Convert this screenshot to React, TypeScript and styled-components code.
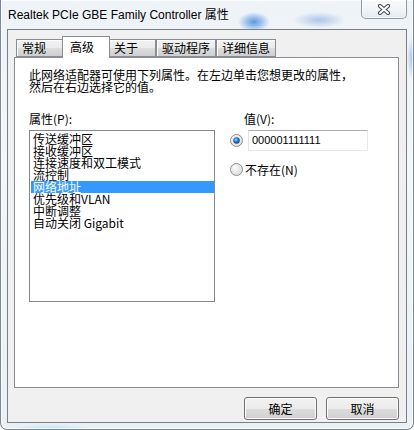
import styled, { createGlobalStyle } from "styled-components";

const GlobalStyle = createGlobalStyle`
    html, body {
        margin: 0;
        padding: 0;
        background: #ffffff;
    }
    body {
        font-family: "Noto Sans CJK SC", "Liberation Sans", sans-serif;
        font-size: 12px;
        color: #000;
    }
`;

const Window = styled.div`
    box-sizing: border-box;
    width: 414px;
    height: 430px;
    display: flex;
    flex-direction: column;
    padding: 0 6px 6px;
    border: 1px solid #7d8794;
    border-top: none;
    border-radius: 0 0 7px 7px;
    box-shadow: inset 0 0 0 1px rgba(255, 255, 255, 0.75);
    background:
        radial-gradient(ellipse 16px 10px at 253px 22px, rgba(40, 120, 220, 0.75), rgba(40, 120, 220, 0) 100%),
        radial-gradient(ellipse 26px 8px at 318px 20px, rgba(120, 160, 215, 0.55), rgba(120, 160, 215, 0) 100%),
        radial-gradient(ellipse 6px 22px at 412px 58px, rgba(90, 150, 225, 0.6), rgba(90, 150, 225, 0) 100%),
        radial-gradient(ellipse 40px 6px at 50px 430px, rgba(150, 220, 240, 0.7), rgba(150, 220, 240, 0) 100%),
        linear-gradient(180deg, #eef3f8 0%, #f3f6fa 40%, #e9f0f6 100%);
`;

const TitleBar = styled.div`
    height: 29px;
    display: flex;
    justify-content: space-between;
    align-items: flex-start;
`;

const TitleText = styled.div`
    padding: 8px 0 0 1px;
    font-family: "Liberation Sans", "Noto Sans CJK SC", sans-serif;
    font-size: 12px;
    line-height: 14px;
    color: #000;
    white-space: nowrap;
`;

const CloseButton = styled.div`
    box-sizing: border-box;
    width: 46px;
    height: 19px;
    display: flex;
    align-items: center;
    justify-content: center;
    border: 1px solid #8f99a4;
    border-top: none;
    border-radius: 0 0 5px 5px;
    background: linear-gradient(180deg, rgba(255, 255, 255, 0.6) 0%, rgba(240, 244, 248, 0.7) 55%, rgba(225, 232, 240, 0.8) 100%);
    box-shadow: inset 0 0 0 1px rgba(255, 255, 255, 0.6);
`;

const Client = styled.div`
    flex: 1;
    display: flex;
    flex-direction: column;
    border: 1px solid #7b7f86;
    background: #f0f0f0;
    padding: 6px 7px 2px 6px;
    min-height: 0;
`;

const TabRow = styled.div`
    display: flex;
    align-items: flex-end;
    padding-left: 2px;
    height: 21px;
    position: relative;
    z-index: 1;
`;

const Tab = styled.div<{ $active?: boolean }>`
    box-sizing: border-box;
    min-width: 48px;
    height: ${(p) => (p.$active ? "22px" : "18px")};
    margin: ${(p) => (p.$active ? "0 -2px -1px" : "0")};
    padding: ${(p) => (p.$active ? "2px 7px 0" : "0 5px")};
    border: 1px solid #898c95;
    border-bottom: ${(p) => (p.$active ? "none" : "1px solid #898c95")};
    background: ${(p) =>
        p.$active
            ? "#ffffff"
            : "linear-gradient(180deg, #f2f2f2 0%, #ebebeb 50%, #dddddd 51%, #cfcfcf 100%)"};
    box-shadow: ${(p) => (p.$active ? "none" : "inset 1px 1px 0 #fcfcfc")};
    position: relative;
    z-index: ${(p) => (p.$active ? 2 : 1)};
    font-size: 12px;
    line-height: 16px;
    white-space: nowrap;
`;

const Panel = styled.div`
    flex: 1;
    border: 1px solid #898c95;
    background: #ffffff;
    padding: 11px 14px;
    display: flex;
    flex-direction: column;
`;

const Description = styled.div`
    font-size: 12px;
    line-height: 12px;
    white-space: nowrap;
`;

const Columns = styled.div`
    display: flex;
    gap: 15px;
    margin-top: 20px;
`;

const PropertyColumn = styled.div`
    width: 186px;
    display: flex;
    flex-direction: column;
`;

const ValueColumn = styled.div`
    display: flex;
    flex-direction: column;
    flex: 1;
`;

const FieldLabel = styled.div<{ $indent?: number }>`
    font-size: 12px;
    line-height: 12px;
    height: 12px;
    padding-left: ${(p) => p.$indent ?? 0}px;
    margin-bottom: 5px;
    white-space: nowrap;
`;

const ListBox = styled.div`
    box-sizing: border-box;
    height: 172px;
    border: 1px solid #828790;
    padding: 2px 0 0 1px;
    background: #fff;
`;

const ListItem = styled.div<{ $selected?: boolean }>`
    height: 12px;
    line-height: 12px;
    padding-left: 2px;
    font-size: 12px;
    white-space: nowrap;
    background: ${(p) => (p.$selected ? "#3399ff" : "transparent")};
    color: ${(p) => (p.$selected ? "#ffffff" : "#000000")};
`;

const RadioRow = styled.div<{ $gap: number; $top?: number }>`
    display: flex;
    align-items: center;
    gap: ${(p) => p.$gap}px;
    margin-top: ${(p) => p.$top ?? 0}px;
    white-space: nowrap;
    font-size: 12px;
    line-height: 12px;
`;

const EditBox = styled.div`
    box-sizing: border-box;
    width: 120px;
    height: 21px;
    border: 1px solid #e3e9ef;
    border-top-color: #abadb3;
    border-left-color: #e2e3ea;
    padding-left: 3px;
    font-family: "Liberation Sans", sans-serif;
    font-size: 11px;
    line-height: 19px;
    background: #fff;
`;

const ButtonRow = styled.div`
    display: flex;
    justify-content: flex-end;
    gap: 9px;
    margin-top: 9px;
`;

const Button = styled.div`
    box-sizing: border-box;
    width: 73px;
    height: 23px;
    border: 1px solid #707070;
    border-radius: 3px;
    background: linear-gradient(180deg, #f2f2f2 0%, #ebebeb 50%, #dddddd 51%, #cfcfcf 100%);
    box-shadow: inset 0 0 0 1px #fcfcfc;
    display: flex;
    align-items: center;
    justify-content: center;
    font-size: 12px;
    line-height: 12px;
`;

const CloseGlyph = () => (
    <svg width="14" height="11" viewBox="0 0 14 11">
        <path d="M3 2 L11 9 M11 2 L3 9" stroke="#4a525c" strokeWidth="4.2" strokeLinecap="round" />
        <path d="M3 2 L11 9 M11 2 L3 9" stroke="#ffffff" strokeWidth="2" strokeLinecap="round" />
    </svg>
);

type RadioProps = {
    checked?: boolean;
    id: string;
};

const Radio = ({ checked, id }: RadioProps) => (
    <svg width="13" height="13" viewBox="0 0 13 13">
        <defs>
            <radialGradient id={`${id}-bg`} cx="0.35" cy="0.3" r="0.8">
                <stop offset="0" stopColor="#ffffff" />
                <stop offset="1" stopColor="#d4d4d4" />
            </radialGradient>
            <radialGradient id={`${id}-dot`} cx="0.4" cy="0.35" r="0.7">
                <stop offset="0" stopColor="#9fd3ff" />
                <stop offset="0.5" stopColor="#2a7fcf" />
                <stop offset="1" stopColor="#0d3e78" />
            </radialGradient>
        </defs>
        <circle cx="6.5" cy="6.5" r="6" fill={`url(#${id}-bg)`} stroke="#8d8d8d" strokeWidth="1" />
        <circle cx="6.5" cy="6.5" r="4.5" fill="none" stroke="#e8e8e8" strokeWidth="1" />
        {checked && <circle cx="6.5" cy="6.5" r="3" fill={`url(#${id}-dot)`} stroke="#1b4f8a" strokeWidth="0.6" />}
    </svg>
);

const tabs = ["常规", "高级", "关于", "驱动程序", "详细信息"];

const properties = [
    "传送缓冲区",
    "接收缓冲区",
    "连接速度和双工模式",
    "流控制",
    "网络地址",
    "优先级和VLAN",
    "中断调整",
    "自动关闭 Gigabit",
];

const App = () => {
    const selected = "网络地址";

    return (
        <>
            <GlobalStyle />
            <Window>
                <TitleBar>
                    <TitleText>Realtek PCIe GBE Family Controller 属性</TitleText>
                    <CloseButton>
                        <CloseGlyph />
                    </CloseButton>
                </TitleBar>

                <Client>
                    <TabRow>
                        {tabs.map((t) => (
                            <Tab key={t} $active={t === "高级"}>{t}</Tab>
                        ))}
                    </TabRow>

                    <Panel>
                        <Description>
                            此网络适配器可使用下列属性。在左边单击您想更改的属性，
                            <br />
                            然后在右边选择它的值。
                        </Description>

                        <Columns>
                            <PropertyColumn>
                                <FieldLabel>属性(P):</FieldLabel>
                                <ListBox>
                                    {properties.map((p) => (
                                        <ListItem key={p} $selected={p === selected}>{p}</ListItem>
                                    ))}
                                </ListBox>
                            </PropertyColumn>

                            <ValueColumn>
                                <FieldLabel $indent={14}>值(V):</FieldLabel>
                                <RadioRow $gap={5}>
                                    <Radio id="r-value" checked />
                                    <EditBox>000001111111</EditBox>
                                </RadioRow>
                                <RadioRow $gap={2} $top={12}>
                                    <Radio id="r-none" />
                                    <span>不存在(N)</span>
                                </RadioRow>
                            </ValueColumn>
                        </Columns>
                    </Panel>

                    <ButtonRow>
                        <Button>确定</Button>
                        <Button>取消</Button>
                    </ButtonRow>
                </Client>
            </Window>
        </>
    );
};

export default App;
